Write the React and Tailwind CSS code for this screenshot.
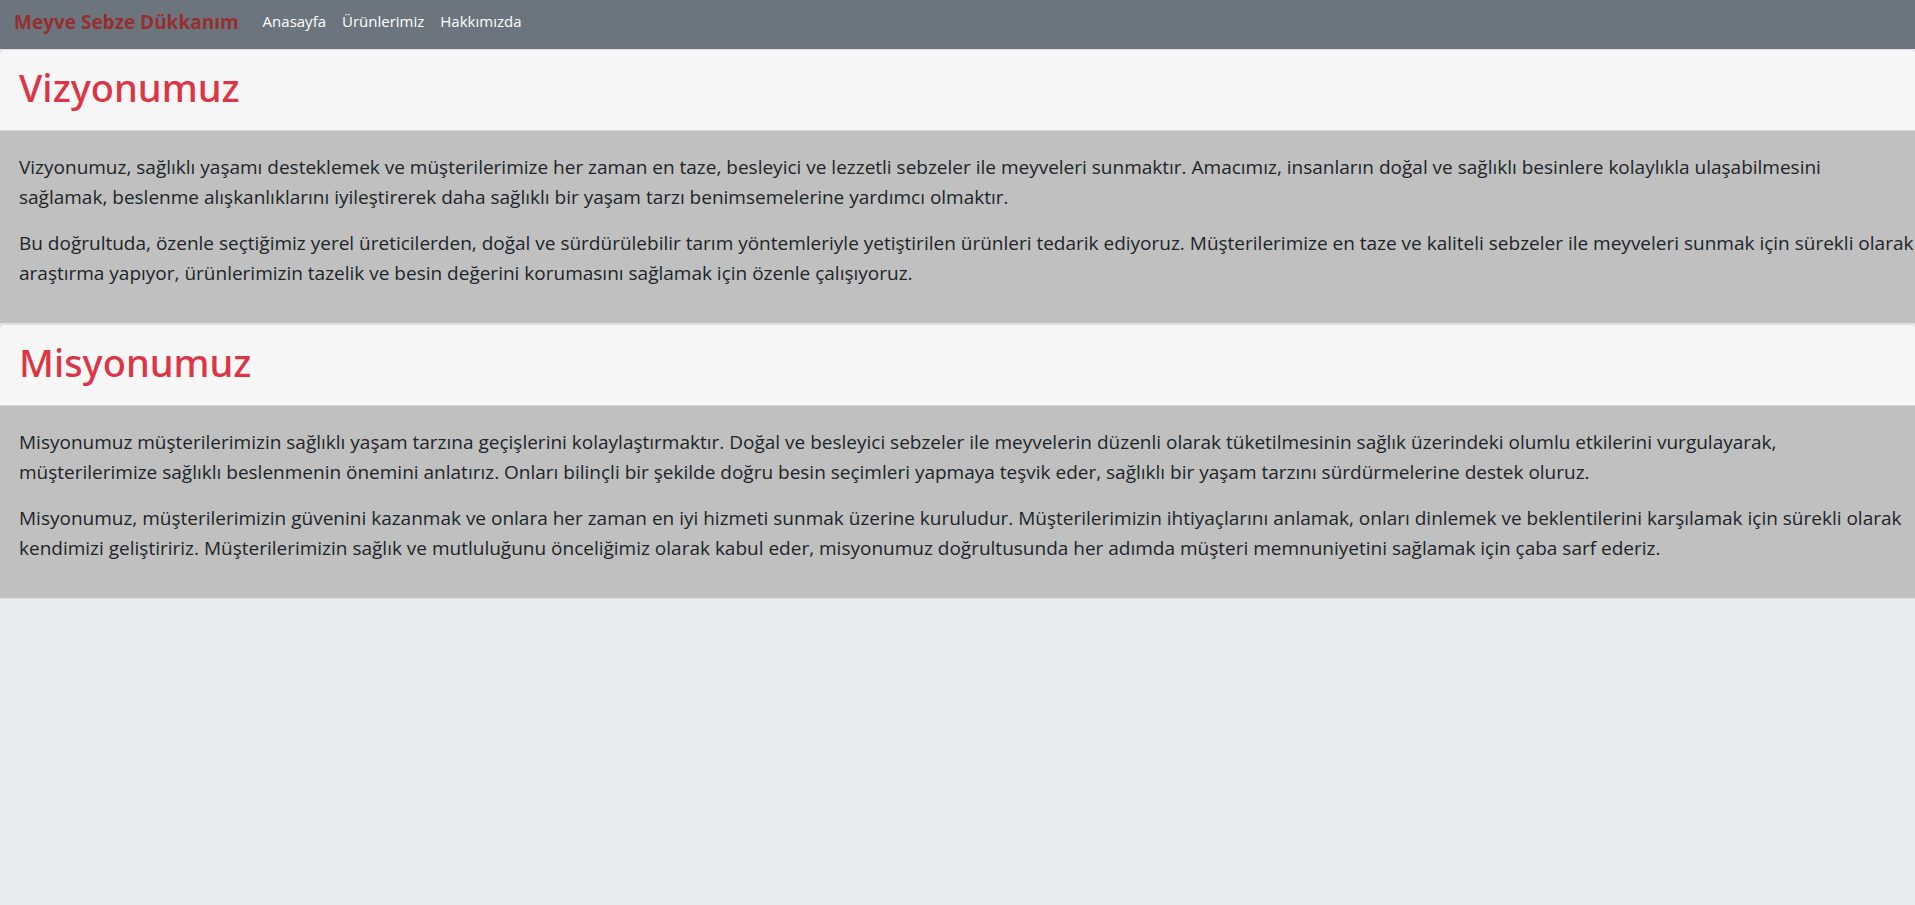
const links = ["Anasayfa", "Ürünlerimiz", "Hakkımızda"];

// Line feeds in a paragraph take effect on wide screens only.
const sections = [
  {
    title: "Vizyonumuz",
    paragraphs: [
      "Vizyonumuz, sağlıklı yaşamı desteklemek ve müşterilerimize her zaman en taze, besleyici ve lezzetli sebzeler ile meyveleri sunmaktır. Amacımız, insanların doğal ve sağlıklı besinlere kolaylıkla ulaşabilmesini\nsağlamak, beslenme alışkanlıklarını iyileştirerek daha sağlıklı bir yaşam tarzı benimsemelerine yardımcı olmaktır.",
      "Bu doğrultuda, özenle seçtiğimiz yerel üreticilerden, doğal ve sürdürülebilir tarım yöntemleriyle yetiştirilen ürünleri tedarik ediyoruz. Müşterilerimize en taze ve kaliteli sebzeler ile meyveleri sunmak için sürekli olarak\naraştırma yapıyor, ürünlerimizin tazelik ve besin değerini korumasını sağlamak için özenle çalışıyoruz.",
    ],
  },
  {
    title: "Misyonumuz",
    paragraphs: [
      "Misyonumuz müşterilerimizin sağlıklı yaşam tarzına geçişlerini kolaylaştırmaktır. Doğal ve besleyici sebzeler ile meyvelerin düzenli olarak tüketilmesinin sağlık üzerindeki olumlu etkilerini vurgulayarak,\nmüşterilerimize sağlıklı beslenmenin önemini anlatırız. Onları bilinçli bir şekilde doğru besin seçimleri yapmaya teşvik eder, sağlıklı bir yaşam tarzını sürdürmelerine destek oluruz.",
      "Misyonumuz, müşterilerimizin güvenini kazanmak ve onlara her zaman en iyi hizmeti sunmak üzerine kuruludur. Müşterilerimizin ihtiyaçlarını anlamak, onları dinlemek ve beklentilerini karşılamak için sürekli olarak\nkendimizi geliştiririz. Müşterilerimizin sağlık ve mutluluğunu önceliğimiz olarak kabul eder, misyonumuz doğrultusunda her adımda müşteri memnuniyetini sağlamak için çaba sarf ederiz.",
    ],
  },
];

function Section({ title, paragraphs }) {
  return (
    <section className="rounded-t-sm border-y border-[#dfdfdf] bg-[#c0c0c0]">
      <div className="rounded-t-sm border-b border-[#d8d8d8] bg-[#f7f7f7] px-[19px] pt-[13px] pb-[19px]">
        <h1 className="font-['Noto_Sans',sans-serif] text-[38px] leading-12 font-medium text-[#dc3545]">{title}</h1>
      </div>
      <div className="flex flex-col gap-4 pt-[21px] pr-[19px] pb-[35px] pl-[19px] text-[19px] leading-[30px] 2xl:pr-0">
        {paragraphs.map((text) => (
          <p key={text} className="2xl:whitespace-pre-line">
            {text}
          </p>
        ))}
      </div>
    </section>
  );
}

export default function App() {
  return (
    <div className="min-h-screen bg-[#e8ecef] font-['Open_Sans',sans-serif] text-[#212529]">
      <nav className="flex items-start gap-6 bg-[#6c757d] px-[14px] pt-[7px] pb-3">
        <a href="#" className="text-[19px] leading-[30px] font-bold text-[#952f30]">
          Meyve Sebze Dükkanım
        </a>
        <ul className="flex gap-4 text-[15px] leading-7 text-white">
          {links.map((link) => (
            <li key={link}>
              <a href="#">{link}</a>
            </li>
          ))}
        </ul>
      </nav>
      <main>
        {sections.map((section) => (
          <Section key={section.title} {...section} />
        ))}
      </main>
    </div>
  );
}
